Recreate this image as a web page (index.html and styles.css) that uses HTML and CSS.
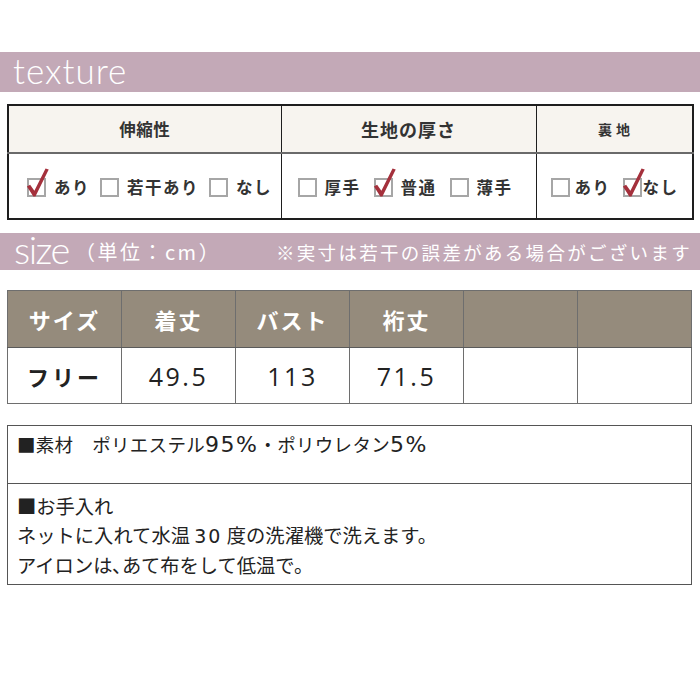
FILE: index.html
```html
<!DOCTYPE html>
<html lang="ja">
<head>
<meta charset="utf-8">
<link rel="stylesheet" href="styles.css">
</head>
<body>
<div class="page">
  <div class="band band-texture"><span class="band-title">texture</span></div>

  <table class="tex">
    <colgroup><col class="c1"><col class="c2"><col class="c3"></colgroup>
    <tr class="tex-head">
      <th>伸縮性</th>
      <th class="h-big">生地の厚さ</th>
      <th class="h-small">裏&nbsp;地</th>
    </tr>
    <tr class="tex-body">
      <td>
        <div class="opts">
          <span class="opt"><span class="cb on"><svg viewBox="0 0 16 16" class="chk"><polygon points="-1,7 2,5.5 6,11 16.5,-10 19.5,-9 7,16.5 5,16.5"/></svg></span><span class="lbl">あり</span></span>
          <span class="opt"><span class="cb"></span><span class="lbl">若干あり</span></span>
          <span class="opt"><span class="cb"></span><span class="lbl">なし</span></span>
        </div>
      </td>
      <td>
        <div class="opts opts-wide">
          <span class="opt"><span class="cb"></span><span class="lbl">厚手</span></span>
          <span class="opt"><span class="cb on"><svg viewBox="0 0 16 16" class="chk"><polygon points="-1,7 2,5.5 6,11 16.5,-10 19.5,-9 7,16.5 5,16.5"/></svg></span><span class="lbl">普通</span></span>
          <span class="opt"><span class="cb"></span><span class="lbl">薄手</span></span>
        </div>
      </td>
      <td>
        <div class="opts opts-tight">
          <span class="opt"><span class="cb"></span><span class="lbl">あり</span></span>
          <span class="opt"><span class="cb on"><svg viewBox="0 0 16 16" class="chk"><polygon points="-1,7 2,5.5 6,11 16.5,-10 19.5,-9 7,16.5 5,16.5"/></svg></span><span class="lbl">なし</span></span>
        </div>
      </td>
    </tr>
  </table>

  <div class="band band-size">
    <span class="band-title size-title">size</span>
    <span class="unit">（単位：cm）</span>
    <span class="note">※実寸は若干の誤差がある場合がございます</span>
  </div>

  <table class="sz">
    <tr class="sz-head">
      <th>サイズ</th><th>着丈</th><th>バスト</th><th>裄丈</th><th></th><th></th>
    </tr>
    <tr class="sz-body">
      <td class="jp">フリー</td><td>49.5</td><td>113</td><td>71.5</td><td></td><td></td>
    </tr>
  </table>

  <div class="info">
    <div class="info-row info-mat">■素材　ポリエステル<span class="num">95%</span>・ポリウレタン<span class="num">5%</span></div>
    <div class="info-row info-care">
      <div>■お手入れ</div>
      <div>ネットに入れて水温 <span class="num2">30</span> 度の洗濯機で洗えます。</div>
      <div>アイロンは､あて布をして低温で。</div>
    </div>
  </div>
</div>
</body>
</html>
```

FILE: styles.css
```css
* { box-sizing: border-box; }
html, body { margin: 0; padding: 0; background: #fff; }
body {
  font-family: "Noto Sans CJK JP", "Noto Sans", sans-serif;
  color: #2a2a2a;
  width: 700px;
  height: 700px;
  overflow: hidden;
}
.page { padding-top: 52px; }

.band {
  background: #c3a9b7;
  color: #fff;
  display: flex;
  align-items: center;
}
.band-texture { height: 40px; padding-left: 13px; }
.band-title {
  font-family: "Lato", sans-serif;
  font-weight: 300;
  font-size: 35px;
  line-height: 1;
  letter-spacing: 1px;
  position: relative;
  top: -2px;
}
.band-size { height: 37px; margin-top: 13px; padding-left: 14px; padding-right: 8px; }
.size-title { font-size: 38px; letter-spacing: -1.5px; top: -3px; }
.unit { font-size: 20px; margin-left: 6px; letter-spacing: 2.5px; }
.note { font-size: 18.5px; margin-left: auto; letter-spacing: 2.3px; }

/* texture table */
.tex {
  margin: 12px 0 0 7px;
  width: 685px;
  border-collapse: collapse;
  table-layout: fixed;
  border: 2px solid #1e1e1e;
}
.tex .c1 { width: 273px; }
.tex .c2 { width: 255px; }
.tex .c3 { width: 157px; }
.tex th, .tex td { border-left: 1.5px solid #1e1e1e; padding: 0; }
.tex-head th {
  background: #f7f4ef;
  height: 48px;
  font-size: 16.5px;
  font-weight: 700;
  color: #333;
  text-align: center;
  border-bottom: 2px solid #6a6a6a;
  letter-spacing: 0.5px;
}
.tex-head th.h-big { font-size: 18px; letter-spacing: 1px; }
.tex-head th.h-small { font-size: 14px; }
.tex-body td { height: 66px; vertical-align: middle; }

.opts {
  display: flex;
  align-items: center;
  gap: 10px;
  padding-left: 18px;
  padding-top: 2px;
}
.opts-wide { gap: 13px; padding-left: 16px; }
.opts-tight { gap: 12px; padding-left: 14px; }
.opt { display: flex; align-items: center; gap: 8px; }
.opts-tight .opt { gap: 5px; }
.opts-tight .opt + .opt { gap: 1px; }
.lbl { font-size: 16.5px; font-weight: 700; color: #333; letter-spacing: 1.5px; }
.cb {
  position: relative;
  width: 19px;
  height: 19px;
  border: 2px solid #a6a6a6;
  background: #fff;
  flex: none;
}
.chk {
  position: absolute;
  left: -1px;
  top: -1px;
  width: 17px;
  height: 17px;
  overflow: visible;
}
.chk polygon { fill: #a4303c; }

/* size table */
.sz {
  margin: 20px 0 0 7px;
  width: 685px;
  border-collapse: collapse;
  table-layout: fixed;
  border: 1.5px solid #6e6e6e;
}
.sz th, .sz td {
  border-left: 1.5px solid #6e6e6e;
  text-align: center;
  padding: 0;
}
.sz-head th {
  background: #958b7c;
  height: 57px;
  color: #fff;
  font-size: 22px;
  font-weight: 700;
  letter-spacing: 2px;
  border-bottom: 1.5px solid #5a5a5a;
}
.sz-body td {
  height: 56px;
  font-family: "Open Sans", "Noto Sans", sans-serif;
  font-size: 25px;
  font-weight: 500;
  letter-spacing: 2.5px;
  color: #222;
}
.sz-body td.jp {
  font-family: "Noto Sans CJK JP", sans-serif;
  font-size: 22px;
  font-weight: 700;
  letter-spacing: 3px;
}

/* info box */
.info {
  margin: 21px 0 0 7px;
  width: 685px;
  border: 1.5px solid #555;
}
.info-row { padding-left: 9px; font-size: 18.5px; color: #222; }
.info-mat { height: 58px; padding-top: 5px; border-bottom: 1.5px solid #555; letter-spacing: 0.3px; }
.info-care { height: 100px; padding-top: 8px; line-height: 29px; font-size: 19.3px; }
.num { font-family: "DejaVu Sans", sans-serif; letter-spacing: 1.5px; font-size: 22px; }
.num2 { font-family: "DejaVu Sans", sans-serif; letter-spacing: 2px; font-size: 19px; }
```
